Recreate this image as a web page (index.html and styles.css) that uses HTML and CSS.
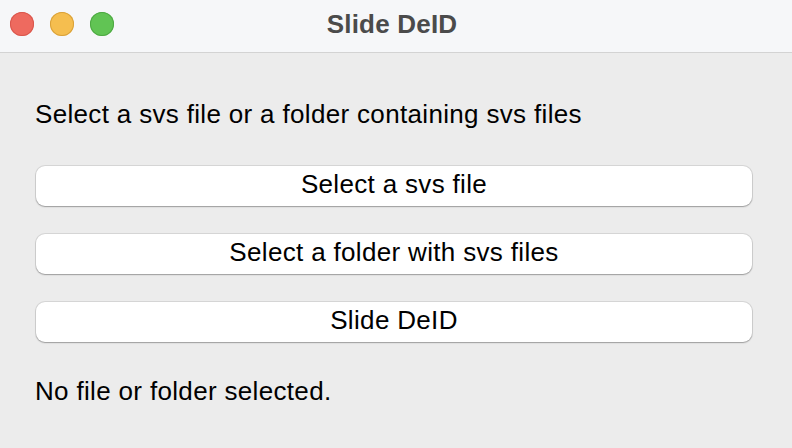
FILE: index.html
```html
<!DOCTYPE html>
<html>
<head>
<meta charset="utf-8">
<link rel="stylesheet" href="styles.css">
</head>
<body>
<div class="window">
  <div class="titlebar">
    <div class="lights">
      <span class="light red"></span>
      <span class="light yellow"></span>
      <span class="light green"></span>
    </div>
    <div class="title">Slide DeID</div>
  </div>
  <div class="content">
    <p class="label top-label">Select a svs file or a folder containing svs files</p>
    <div class="buttons">
      <button class="btn">Select a svs file</button>
      <button class="btn">Select a folder with svs files</button>
      <button class="btn">Slide DeID</button>
    </div>
    <p class="label status">No file or folder selected.</p>
  </div>
</div>
</body>
</html>
```

FILE: styles.css
```css
* { box-sizing: border-box; }
html, body { margin: 0; padding: 0; }
body {
  width: 792px;
  height: 448px;
  overflow: hidden;
  font-family: "Liberation Sans", Arial, sans-serif;
  background: #ececec;
}
.window {
  width: 792px;
  height: 448px;
  display: flex;
  flex-direction: column;
  background: #ececec;
}
.titlebar {
  height: 53px;
  flex: none;
  background: #f6f7f9;
  border-bottom: 1px solid #d3d3d3;
  position: relative;
  display: flex;
  align-items: center;
  justify-content: center;
}
.lights {
  position: absolute;
  left: 10px;
  top: 12px;
  display: flex;
  gap: 16px;
}
.light {
  width: 24px;
  height: 24px;
  border-radius: 50%;
  display: block;
}
.red { background: #ee6a5f; box-shadow: inset 0 0 0 1px #d9574d; }
.yellow { background: #f5be4f; box-shadow: inset 0 0 0 1px #d9a13a; }
.green { background: #61c454; box-shadow: inset 0 0 0 1px #4ea843; }
.title {
  font-weight: bold;
  font-size: 26px;
  color: #4b4b4b;
  margin-top: -3px;
  margin-left: -8px;
  letter-spacing: 0.2px;
}
.content {
  padding: 46px 40px 0 36px;
}
.label {
  margin: 0;
  font-size: 26px;
  line-height: 30px;
  color: #000;
  letter-spacing: 0.33px;
}
.top-label { margin-left: -1px; }
.buttons {
  margin-top: 37px;
  display: flex;
  flex-direction: column;
  gap: 28px;
}
.btn {
  height: 40px;
  width: 716px;
  background: #ffffff;
  border: none;
  border-radius: 9px;
  box-shadow: 0 0 0 1px rgba(0,0,0,0.09), 0 1px 1.5px rgba(0,0,0,0.28);
  font-family: "Liberation Sans", Arial, sans-serif;
  font-size: 26px;
  letter-spacing: 0.33px;
  color: #000;
  padding: 0 0 3px 0;
  line-height: 37px;
}
.status {
  margin-top: 34px;
  margin-left: -1px;
}
```
